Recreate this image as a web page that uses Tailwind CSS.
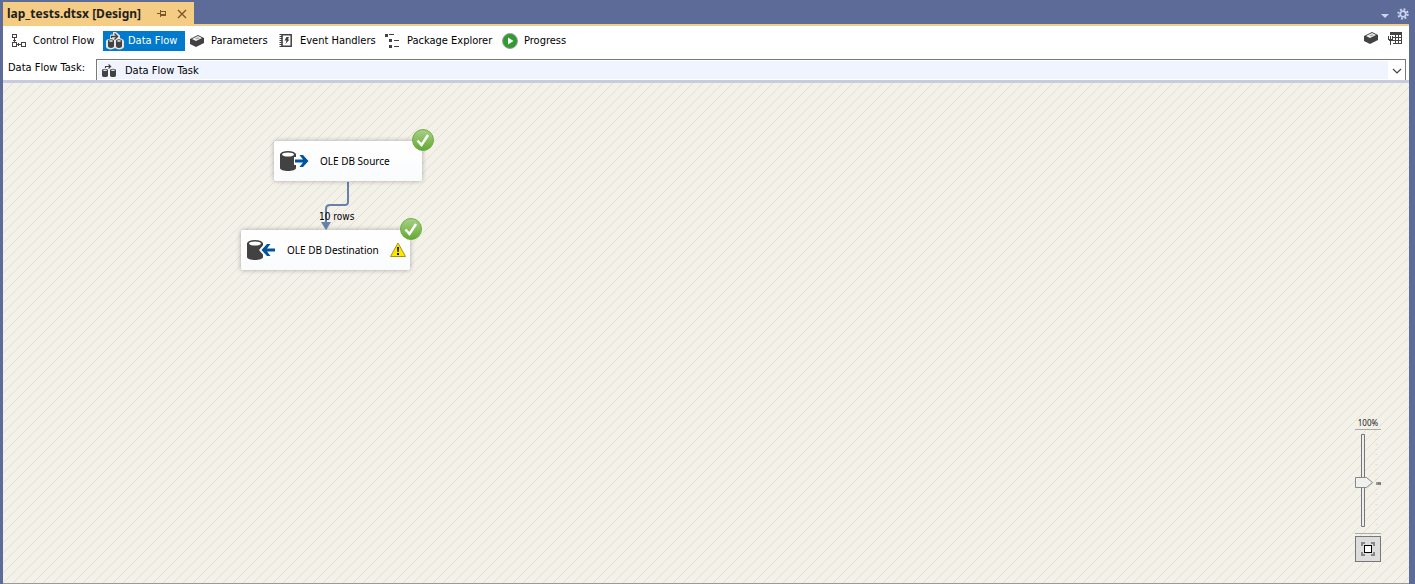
<!DOCTYPE html>
<html lang="en">
<head>
<meta charset="utf-8">
<title>lap_tests.dtsx [Design]</title>
<script src="https://cdn.jsdelivr.net/npm/@tailwindcss/browser@4"></script>
</head>
<body class="min-h-screen flex flex-col bg-[#5d6b99] pl-[3px] pr-[6px] text-[11px] leading-4 text-black font-['DejaVu_Sans_Condensed','Noto_Sans',sans-serif]">
<svg class="absolute size-0" aria-hidden="true">
  <defs><linearGradient id="okFill" x2="0" y2="1"><stop stop-color="#a9d08a"/><stop offset=".5" stop-color="#86bd5c"/><stop offset="1" stop-color="#62a830"/></linearGradient></defs>
  <symbol id="flow" viewBox="0 0 16 16">
    <path d="M1 7.500v5c0 2 6 2 6 0v-5M9 7.500v5c0 2 6 2 6 0v-5" fill="#424242"/>
    <ellipse cx="4" cy="7.500" rx="3" ry="1.800" fill="#424242"/><ellipse cx="12" cy="7.500" rx="3" ry="1.800" fill="#424242"/>
    <ellipse cx="4" cy="7.300" rx="2" ry=".8" fill="#eee"/><ellipse cx="12" cy="7.300" rx="2" ry=".8" fill="#eee"/>
    <path d="M4.500 5V3.500h5M7.500 1.500l2.200 2-2.200 2" fill="none" stroke="#424242" stroke-width="1.100"/>
  </symbol>
  <symbol id="flow-active" viewBox="0 0 18 18">
    <path d="M4 7V3.500L5 2.500h2V0h3l4 3.500V6l3 1.500 1 1.500v6c-1 3-7 3-9 1-2 2-8 2-9-1V9l1-1.500z" fill="#e6e6e6"/>
    <path d="M2 9v5c0 2.500 6 2.500 6 0V9M10 9v5c0 2.500 6 2.500 6 0V9" fill="#424242"/>
    <ellipse cx="5" cy="9" rx="3" ry="1.800" fill="#424242"/><ellipse cx="13" cy="9" rx="3" ry="1.800" fill="#424242"/>
    <ellipse cx="5" cy="9" rx="2" ry=".8" fill="#fff"/><ellipse cx="13" cy="9" rx="2" ry=".8" fill="#fff"/>
    <path d="M5.500 6V4.500H11M8.500 1.500l3 3-3 3" fill="none" stroke="#424242" stroke-width="1.400"/>
  </symbol>
  <symbol id="cube" viewBox="0 0 16 14">
    <path d="M1 5l8-4 6 3v5l-8 4-6-3z" fill="#424242"/>
    <path d="M3 5l6-3 4 2-6 3z" fill="#f4f4f4"/><path d="M6 4.500l3-1.300 2 1-3 1.300z" fill="#aaa"/>
  </symbol>
  <symbol id="ok" viewBox="0 0 22 22">
    <circle cx="11" cy="11" r="10.500" fill="url(#okFill)" stroke="#6fae44"/>
    <path d="M5.500 11.500l4 4.500 6.500-10" fill="none" stroke="#fff" stroke-width="2.500"/>
  </symbol>
</svg>

<header class="flex h-6 items-end justify-between">
  <div class="flex h-[22px] w-[191px] items-center bg-[#f5cc84] pl-1 text-[#1e1e1e]">
    <h1 class="grow pt-[2px] font-['Noto_Sans',sans-serif] text-[12px] font-bold whitespace-nowrap">lap_tests.dtsx [Design]</h1>
    <button aria-label="Pin" class="mt-[2px] mr-2 size-3"><svg viewBox="0 0 12 12" class="size-3" fill="none" stroke="#75592d" shape-rendering="crispEdges"><path d="M1 5.500h3M4.500 2v7M4 3.500h5.500v4H4M4 6.500h5"/></svg></button>
    <button aria-label="Close" class="mt-[2px] mr-[6px] size-3"><svg viewBox="0 0 12 12" class="size-3"><path d="M2 2l8 8M10 2l-8 8" stroke="#75592d" stroke-width="1.400"/></svg></button>
  </div>
  <div class="flex h-[22px] items-center gap-2 pt-[2px]">
    <button aria-label="Open documents" class="w-2"><svg viewBox="0 0 8 4" class="mt-1 h-1 w-2"><path d="M0 0h8l-4 4z" fill="#ccd5f0"/></svg></button>
    <button aria-label="Window options" class="size-3"><svg viewBox="0 0 12 12" class="size-3" fill="none" stroke="#ccd5f0"><circle cx="6" cy="6" r="2.800" stroke-width="1.800"/><circle cx="6" cy="6" r="4.700" stroke-width="2" stroke-dasharray="1.850 1.841"/></svg></button>
  </div>
</header>

<div class="border-t-2 border-[#f5cc84] bg-white">
  <nav class="flex h-[29px] items-center justify-between pr-[6px]">
    <div class="flex items-center">
      <button class="flex h-5 w-[100px] items-center gap-[6px] pl-2 whitespace-nowrap">
        <svg viewBox="0 0 16 16" class="size-4" fill="none" stroke="#424242" shape-rendering="crispEdges"><path d="M1.500 1.500h4v3h-4zM1.500 9.500h4v4h-4zM10.500 9.500h4v4h-4zM3.500 5v4M2 7.500h3M6 11.500h4M7.500 10v3"/></svg>Control Flow</button>
      <button class="flex h-5 w-[82px] items-center gap-1 bg-[#007acc] pl-[3px] whitespace-nowrap text-white">
        <svg class="size-[18px]"><use href="#flow-active"/></svg>Data Flow</button>
      <button class="flex h-5 w-[93px] items-center gap-[6px] pl-1 whitespace-nowrap"><svg class="h-[14px] w-4"><use href="#cube"/></svg>Parameters</button>
      <button class="flex h-5 w-[107px] items-center gap-[6px] whitespace-nowrap">
        <svg viewBox="0 0 16 16" class="size-4"><path d="M4 1.800h9.200v11.400H4z" fill="none" stroke="#424242" stroke-width="1.500"/><path d="M3 1v13" stroke="#424242" stroke-width="3" stroke-dasharray="1 1"/><path d="M8.500 4h2.500L9.800 6.500H11.500l-4 4.500 1-3.500H6.500z" fill="#424242"/></svg>Event Handlers</button>
      <button class="flex h-5 w-[117px] items-center gap-[6px] whitespace-nowrap">
        <svg viewBox="0 0 16 16" class="size-4" fill="#424242" shape-rendering="crispEdges"><path d="M0 1h3v3H0zM4 1h5v1H4zM4 6h3v3H4zM9 7h5v1H9zM4 12h3v3H4zM9 13h5v1H9z"/></svg>Package Explorer</button>
      <button class="flex h-5 items-center gap-[6px] whitespace-nowrap">
        <svg viewBox="0 0 16 16" class="size-4"><circle cx="8" cy="8" r="7.500" fill="#339933" stroke="#9aa49a"/><path d="M6 4.500v7l5.500-3.500z" fill="#fff"/></svg>Progress</button>
    </div>
    <div class="flex items-center gap-2 pb-[5px]">
      <button aria-label="Variables"><svg class="block h-[14px] w-4"><use href="#cube"/></svg></button>
      <button aria-label="Toolbox"><svg viewBox="0 0 16 16" class="block size-4" shape-rendering="crispEdges"><path d="M4 2h11v3H4z" fill="#424242"/><path d="M4.500 4.500h10v9h-10zM4 7.500h11M4 10.500h11M8.500 4v10M11.500 4v10" fill="none" stroke="#424242"/><path d="M0 4h6v12H0z" fill="#fff"/><path d="M1 6h1v3h1V6h1v3h1V6h1v4l-1 1H4v4H3v-4H2l-1-1z" fill="#424242"/><path d="M3 2h4v3H3z" fill="#424242"/></svg></button>
    </div>
  </nav>
  <div class="flex h-[25px] pr-[3px]">
    <label for="task" class="w-[93px] pt-[5px] pl-[5px] whitespace-nowrap">Data Flow Task:</label>
    <div class="relative mt-1 flex grow border border-b-0 border-[#7a7a72] bg-white p-px">
      <select id="task" class="h-full grow appearance-none border-r-[16px] border-white bg-[#f0f4ff] pt-[2px] pl-[27px]"><option>Data Flow Task</option></select>
      <svg class="pointer-events-none absolute top-[3px] left-1 size-4"><use href="#flow"/></svg>
      <svg viewBox="0 0 10 6" class="pointer-events-none absolute top-2 right-[3px] h-[6px] w-[10px]"><path d="M1 1l4 4 4-4" fill="none" stroke="#444" stroke-width="1.200"/></svg>
    </div>
  </div>
</div>

<main class="relative grow border-t-[3px] border-b border-t-[#c8cbdc] border-b-[#999] bg-[#f4f1e9]">
  <svg class="absolute inset-0 size-full" aria-hidden="true">
    <defs><pattern id="hatch" width="10" height="10" patternUnits="userSpaceOnUse"><path d="M-1 11L11 -1M-1 1L1 -1M9 11L11 9" stroke="#e0ded6"/></pattern></defs>
    <rect width="100%" height="100%" fill="url(#hatch)"/>
  </svg>

  <svg class="absolute top-[98px] left-[315px] h-[50px] w-9" viewBox="0 0 36 50" fill="none"><path d="M30 1v20q0 3-3 3H12q-4 0-4 4v14" stroke="#6582aa" stroke-width="2"/><path d="M3 41h10L8 49z" fill="#6582aa"/></svg>
  <span class="absolute top-[126px] left-[316px] text-[10px] leading-4 whitespace-nowrap">10 rows</span>

  <article class="absolute top-[58px] left-[271px] flex h-10 w-[148px] items-center rounded-xs bg-linear-to-b from-white to-[#fafbfd] pl-[5px] shadow-[0_0_5px_rgba(0,0,0,0.3)]">
    <svg viewBox="0 0 30 22" class="h-[22px] w-[30px]"><path d="M1 4v14c0 4 16 4 16 0V4" fill="#424242"/><ellipse cx="9" cy="4.500" rx="8" ry="3.500" fill="#424242"/><ellipse cx="9" cy="4.500" rx="6" ry="2" fill="#fff"/><path d="M15 7h5V4h5l6 7-6 7h-5v-3h-5z" fill="#fff"/><path d="M16 9.500h8L20.500 5H24l5.500 6-5.500 6h-3.500l3.500-4.500h-8z" fill="#00539c"/></svg>
    <h2 class="ml-[11px] font-['Noto_Sans',sans-serif] text-[10px] whitespace-nowrap">OLE DB Source</h2>
    <svg class="absolute -top-3 -right-3 size-[22px]"><use href="#ok"/></svg>
  </article>

  <article class="absolute top-[147px] left-[238px] flex h-10 w-[169px] items-center rounded-xs bg-linear-to-b from-white to-[#fafbfd] pl-[5px] shadow-[0_0_5px_rgba(0,0,0,0.3)]">
    <svg viewBox="0 0 30 22" class="h-[22px] w-[30px]"><path d="M1 4v14c0 4 16 4 16 0V4" fill="#424242"/><ellipse cx="9" cy="4.500" rx="8" ry="3.500" fill="#424242"/><ellipse cx="9" cy="4.500" rx="6" ry="2" fill="#fff"/><path d="M13 11l6-7h6v3h4v8h-4v3h-6z" fill="#fff"/><path d="M29 9.500h-8L24.500 5H21l-5.500 6 5.500 6h3.500L21 12.500h8z" fill="#00539c"/></svg>
    <h2 class="ml-[11px] grow font-['Noto_Sans',sans-serif] text-[10px] whitespace-nowrap">OLE DB Destination</h2>
    <svg viewBox="0 0 16 16" class="mr-1 size-4" role="img" aria-label="Warning"><path d="M8 1l7.500 13.500H.5z" fill="#ffe800" stroke="#a89410" stroke-linejoin="round"/><path d="M7 5h2l-.4 5H7.400zM7 11h2v2H7z" fill="#111"/></svg>
    <svg class="absolute -top-3 -right-3 size-[22px]"><use href="#ok"/></svg>
  </article>

  <aside class="absolute right-7 bottom-[21px] flex w-[26px] flex-col">
    <output for="zoom" class="flex h-[14px] items-center justify-center border-b border-[#aaa] font-['Noto_Sans',sans-serif] text-[8px] leading-3 text-[#222]">100%</output>
    <div class="relative h-[104px] border-b border-[#aaa]">
      <svg viewBox="0 0 26 102" class="absolute inset-0 h-[102px] w-[26px]"><path d="M6.500 4.500h3v92h-3z" fill="#eee" stroke="#777"/><path d="M21.500 4v93" stroke="#deddd8" stroke-width="2" stroke-dasharray="1 4"/><path d="M.5 47.500h11l6 5-6 5H.5z" fill="#f0f0f0" stroke="#888"/><path d="M21 53.500h5" stroke="#999" stroke-width="3"/><path d="M23 53.500h3" stroke="#777" stroke-width="2"/></svg>
      <input id="zoom" type="range" aria-label="Zoom" min="0" max="200" value="100" class="absolute inset-0 h-full w-5 opacity-0 [writing-mode:vertical-lr]">
    </div>
    <button aria-label="Zoom to fit" class="mt-[2px] flex size-[26px] items-center justify-center border border-[#777] bg-[#ddd]">
      <svg viewBox="0 0 14 14" class="size-[14px]" shape-rendering="crispEdges"><path d="M0 0h4v2H2v2H0zM10 0h4v4h-2V2h-2zM0 10h2v2h2v2H0zM12 10h2v4h-4v-2h2z" fill="#888"/><path d="M3.500 3.500h7v7h-7z" fill="#fff" stroke="#000"/></svg>
    </button>
  </aside>
</main>
</body>
</html>
